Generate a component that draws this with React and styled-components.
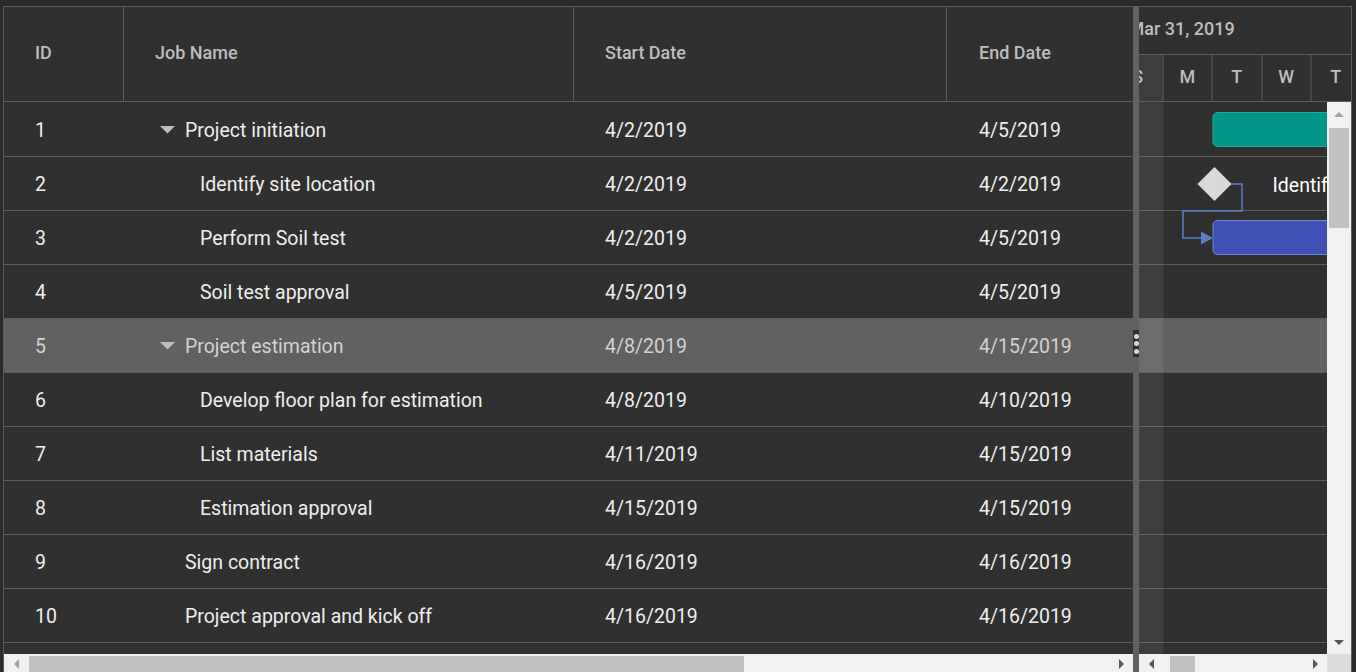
import React from 'react';
import styled, { createGlobalStyle } from 'styled-components';

const GlobalStyle = createGlobalStyle`
  html, body {
    margin: 0;
    background: #2b2b2b;
    overflow: hidden;
  }
  body {
    font-family: Roboto, "Liberation Sans", sans-serif;
  }
`;

const DAY = 49.5; // one day column in the timeline
const SCROLL_X = 25.5; // timeline is scrolled a little to the right
const ROW_H = 54;
const LINE = '#5c5c5c';
const COLUMNS = '120px 450px 373px 1fr';

const tasks = [
  { id: 1, name: 'Project initiation', start: '4/2/2019', end: '4/5/2019', level: 0, parent: true },
  { id: 2, name: 'Identify site location', start: '4/2/2019', end: '4/2/2019', level: 1 },
  { id: 3, name: 'Perform Soil test', start: '4/2/2019', end: '4/5/2019', level: 1 },
  { id: 4, name: 'Soil test approval', start: '4/5/2019', end: '4/5/2019', level: 1 },
  { id: 5, name: 'Project estimation', start: '4/8/2019', end: '4/15/2019', level: 0, parent: true },
  { id: 6, name: 'Develop floor plan for estimation', start: '4/8/2019', end: '4/10/2019', level: 1 },
  { id: 7, name: 'List materials', start: '4/11/2019', end: '4/15/2019', level: 1 },
  { id: 8, name: 'Estimation approval', start: '4/15/2019', end: '4/15/2019', level: 1 },
  { id: 9, name: 'Sign contract', start: '4/16/2019', end: '4/16/2019', level: 0 },
  { id: 10, name: 'Project approval and kick off', start: '4/16/2019', end: '4/16/2019', level: 0 },
];

// chart items, day index counted from Sun Mar 31
const chartItems = {
  1: { type: 'parent', from: 2, days: 4 },
  2: { type: 'milestone', from: 2, label: 'Identify site location' },
  3: { type: 'task', from: 2, days: 4 },
};

const SELECTED = 5;
const weekDays = ['S', 'M', 'T', 'W', 'T', 'F', 'S'];

const Gantt = styled.div`
  margin: 6px 0 0 3px;
  width: 1349px;
  height: 668px;
  box-sizing: border-box;
  border: 1px solid ${LINE};
  background: #303030;
  display: flex;
`;

const GridPane = styled.div`
  width: 1129px;
  flex: none;
  display: flex;
  flex-direction: column;
`;

const HeaderRow = styled.div`
  display: grid;
  grid-template-columns: ${COLUMNS};
  height: 95px;
  flex: none;
  box-sizing: border-box;
  border-bottom: 1px solid ${LINE};
`;

const HeaderCell = styled.div`
  display: flex;
  align-items: center;
  padding: 0 0 3px ${(p) => (p.$last ? 32 : 31)}px;
  border-right: ${(p) => (p.$last ? 'none' : `1px solid ${LINE}`)};
  color: #bdbdbd;
  font-size: 18px;
  font-weight: 500;
`;

const GridBody = styled.div`
  flex: 1;
  min-height: 0;
  padding-top: 1px;
  overflow: hidden;
`;

const Row = styled.div`
  display: grid;
  grid-template-columns: ${COLUMNS};
  height: ${ROW_H}px;
  box-sizing: border-box;
  border-bottom: 1px solid ${LINE};
  background: ${(p) => (p.$selected ? '#616161' : 'transparent')};
  color: ${(p) => (p.$selected ? '#d2d2d2' : '#eeeeee')};
`;

const Cell = styled.div`
  display: flex;
  align-items: center;
  padding: 1px 0 0 ${(p) => p.$pad + (p.$level || 0) * 15}px;
  font-size: 19.5px;
  white-space: nowrap;
  overflow: hidden;
`;

const Expander = styled.span`
  width: 30px;
  flex: none;
  display: flex;
  align-items: center;
  padding-left: 5px;
  box-sizing: border-box;
`;

const Splitter = styled.div`
  width: 6px;
  flex: none;
  background: #616161;
  position: relative;
`;

const SplitterHandle = styled.div`
  position: absolute;
  top: 323px;
  left: 0;
  width: 6px;
  height: 27px;
  background: #2f2f2f;
  display: flex;
  flex-direction: column;
  align-items: center;
  justify-content: center;
  gap: 2.5px;
`;

const Dot = styled.span`
  width: 5px;
  height: 5px;
  border-radius: 50%;
  background: #d6d6d6;
`;

const ChartPane = styled.div`
  flex: 1;
  min-width: 0;
  display: flex;
  flex-direction: column;
  overflow: hidden;
`;

const TimelineHeader = styled.div`
  height: 95px;
  flex: none;
  box-sizing: border-box;
  border-bottom: 1px solid ${LINE};
  overflow: hidden;
`;

const Track = styled.div`
  transform: translateX(-${SCROLL_X}px);
  width: ${DAY * 7}px;
`;

const TopTier = styled.div`
  height: 48px;
  box-sizing: border-box;
  border-bottom: 1px solid ${LINE};
  display: flex;
  align-items: center;
  padding: 0 0 4px 15px;
  color: #bdbdbd;
  font-size: 18px;
  font-weight: 500;
  white-space: nowrap;
`;

const BottomTier = styled.div`
  height: 46px;
  display: flex;
`;

const DayCell = styled.div`
  width: ${DAY}px;
  flex: none;
  box-sizing: border-box;
  border-right: 1px solid ${LINE};
  background: ${(p) => (p.$weekend ? '#3d3d3d' : 'transparent')};
  display: flex;
  align-items: center;
  justify-content: center;
  padding-bottom: 3px;
  color: #bdbdbd;
  font-size: 18px;
  font-weight: 500;
`;

const ChartMain = styled.div`
  flex: 1;
  display: flex;
  min-height: 0;
`;

const ChartBody = styled.div`
  flex: 1;
  position: relative;
  overflow: hidden;
`;

const ChartTrack = styled(Track)`
  position: relative;
  height: 100%;
  padding-top: 1px;
  box-sizing: border-box;
`;

const WeekendStripe = styled.div`
  position: absolute;
  top: 0;
  bottom: 0;
  left: ${(p) => p.$day * DAY}px;
  width: ${DAY}px;
  background: rgba(255, 255, 255, 0.07);
  pointer-events: none;
`;

const ChartRow = styled.div`
  position: relative;
  height: ${ROW_H}px;
  box-sizing: border-box;
  border-bottom: 1px solid ${LINE};
  background: ${(p) => (p.$selected ? '#616161' : 'transparent')};
`;

const Bar = styled.div`
  position: absolute;
  top: 9px;
  height: 35px;
  box-sizing: border-box;
  border-radius: 5px;
  background: ${(p) => (p.$parent ? '#009688' : '#3f51b5')};
  border: 1px solid ${(p) => (p.$parent ? '#26a69a' : '#6f86d6')};
`;

const Diamond = styled.div`
  position: absolute;
  top: 15px;
  width: 24px;
  height: 24px;
  background: #d9d9d9;
  transform: rotate(45deg);
`;

const MilestoneLabel = styled.span`
  position: absolute;
  top: 0;
  height: 100%;
  padding-top: 3px;
  box-sizing: border-box;
  display: flex;
  align-items: center;
  color: #ffffff;
  font-size: 19.5px;
  white-space: nowrap;
`;

const Connector = styled.svg`
  position: absolute;
  left: 0;
  top: 0;
  pointer-events: none;
`;

const ScrollBarH = styled.div`
  height: 19px;
  flex: ${(p) => (p.$grow ? 1 : 'none')};
  background: #f1f1f1;
  display: flex;
`;

const ScrollButton = styled.div`
  width: 24px;
  flex: none;
  display: flex;
  align-items: center;
  justify-content: center;
`;

const ScrollTrack = styled.div`
  flex: 1;
  position: relative;
`;

const ThumbH = styled.div`
  position: absolute;
  top: 2px;
  bottom: 0;
  left: ${(p) => p.$left}px;
  width: ${(p) => p.$width}px;
  background: #c1c1c1;
`;

const ThumbV = styled.div`
  position: absolute;
  left: 2px;
  right: 2px;
  top: ${(p) => p.$top}px;
  height: ${(p) => p.$height}px;
  background: #c1c1c1;
`;

const ScrollBarV = styled.div`
  width: 24px;
  flex: none;
  background: #f1f1f1;
  display: flex;
  flex-direction: column;
`;

const ScrollButtonV = styled(ScrollButton)`
  height: 24px;
`;

const Arrow = styled.span`
  width: 0;
  height: 0;
  border-style: solid;
  ${(p) => {
    const c = p.$dim ? '#a3a3a3' : '#585858';
    switch (p.$dir) {
      case 'left':
        return `border-width: 5px 5px 5px 0; border-color: transparent ${c} transparent transparent;`;
      case 'right':
        return `border-width: 5px 0 5px 5px; border-color: transparent transparent transparent ${c};`;
      case 'up':
        return `border-width: 0 5px 5px 5px; border-color: transparent transparent ${c} transparent;`;
      default:
        return `border-width: 5px 5px 0 5px; border-color: ${c} transparent transparent transparent;`;
    }
  }}
`;

const ChartFooter = styled.div`
  display: flex;
  flex: none;
`;

const Corner = styled.div`
  width: 24px;
  height: 19px;
  background: #dcdcdc;
`;

const CaretDown = () => (
  <svg width="15" height="8" viewBox="0 0 15 8">
    <polygon points="0,0 15,0 7.5,7.5" fill="#bdbdbd" />
  </svg>
);

const HorizontalScroll = ({ grow, thumbLeft, thumbWidth, leftDim }) => (
  <ScrollBarH $grow={grow}>
    <ScrollButton>
      <Arrow $dir="left" $dim={leftDim} />
    </ScrollButton>
    <ScrollTrack>
      <ThumbH $left={thumbLeft} $width={thumbWidth} />
    </ScrollTrack>
    <ScrollButton>
      <Arrow $dir="right" />
    </ScrollButton>
  </ScrollBarH>
);

const TaskGrid = () => (
  <GridPane>
    <HeaderRow>
      <HeaderCell>ID</HeaderCell>
      <HeaderCell>Job Name</HeaderCell>
      <HeaderCell>Start Date</HeaderCell>
      <HeaderCell $last>End Date</HeaderCell>
    </HeaderRow>
    <GridBody>
      {tasks.map((t) => (
        <Row key={t.id} $selected={t.id === SELECTED}>
          <Cell $pad={31}>{t.id}</Cell>
          <Cell $pad={31} $level={t.level}>
            <Expander>{t.parent && <CaretDown />}</Expander>
            {t.name}
          </Cell>
          <Cell $pad={31}>{t.start}</Cell>
          <Cell $pad={32}>{t.end}</Cell>
        </Row>
      ))}
    </GridBody>
    <HorizontalScroll thumbLeft={1} thumbWidth={715} leftDim />
  </GridPane>
);

const ChartItem = ({ item }) => {
  if (!item) return null;
  const x = item.from * DAY;
  if (item.type === 'milestone') {
    return (
      <>
        <Diamond style={{ left: x - 10.5 }} />
        <MilestoneLabel style={{ left: x + 60 }}>{item.label}</MilestoneLabel>
      </>
    );
  }
  return <Bar $parent={item.type === 'parent'} style={{ left: x, width: item.days * DAY }} />;
};

const Chart = () => (
  <ChartPane>
    <TimelineHeader>
      <Track>
        <TopTier>Mar 31, 2019</TopTier>
        <BottomTier>
          {weekDays.map((d, i) => (
            <DayCell key={i} $weekend={i === 0 || i === 6}>
              {d}
            </DayCell>
          ))}
        </BottomTier>
      </Track>
    </TimelineHeader>
    <ChartMain>
      <ChartBody>
        <ChartTrack>
          {tasks.map((t) => (
            <ChartRow key={t.id} $selected={t.id === SELECTED}>
              <ChartItem item={chartItems[t.id]} />
            </ChartRow>
          ))}
          <WeekendStripe $day={0} />
          <WeekendStripe $day={6} />
        </ChartTrack>
        {/* dependency: milestone 2 -> task 3 */}
        <Connector width="188" height="160">
          <polyline
            points="92,82 103,82 103,109 44,109 44,136 64,136"
            fill="none"
            stroke="#5b7ec6"
            strokeWidth="1.5"
          />
          <polygon points="62,129.5 74,136 62,142.5" fill="#5b7ec6" />
        </Connector>
      </ChartBody>
      <ScrollBarV>
        <ScrollButtonV>
          <Arrow $dir="up" $dim />
        </ScrollButtonV>
        <ScrollTrack>
          <ThumbV $top={2} $height={100} />
        </ScrollTrack>
        <ScrollButtonV>
          <Arrow $dir="down" />
        </ScrollButtonV>
      </ScrollBarV>
    </ChartMain>
    <ChartFooter>
      <HorizontalScroll grow thumbLeft={7} thumbWidth={25} />
      <Corner />
    </ChartFooter>
  </ChartPane>
);

export default function App() {
  return (
    <>
      <GlobalStyle />
      <Gantt>
        <TaskGrid />
        <Splitter>
          <SplitterHandle>
            <Dot />
            <Dot />
            <Dot />
          </SplitterHandle>
        </Splitter>
        <Chart />
      </Gantt>
    </>
  );
}
